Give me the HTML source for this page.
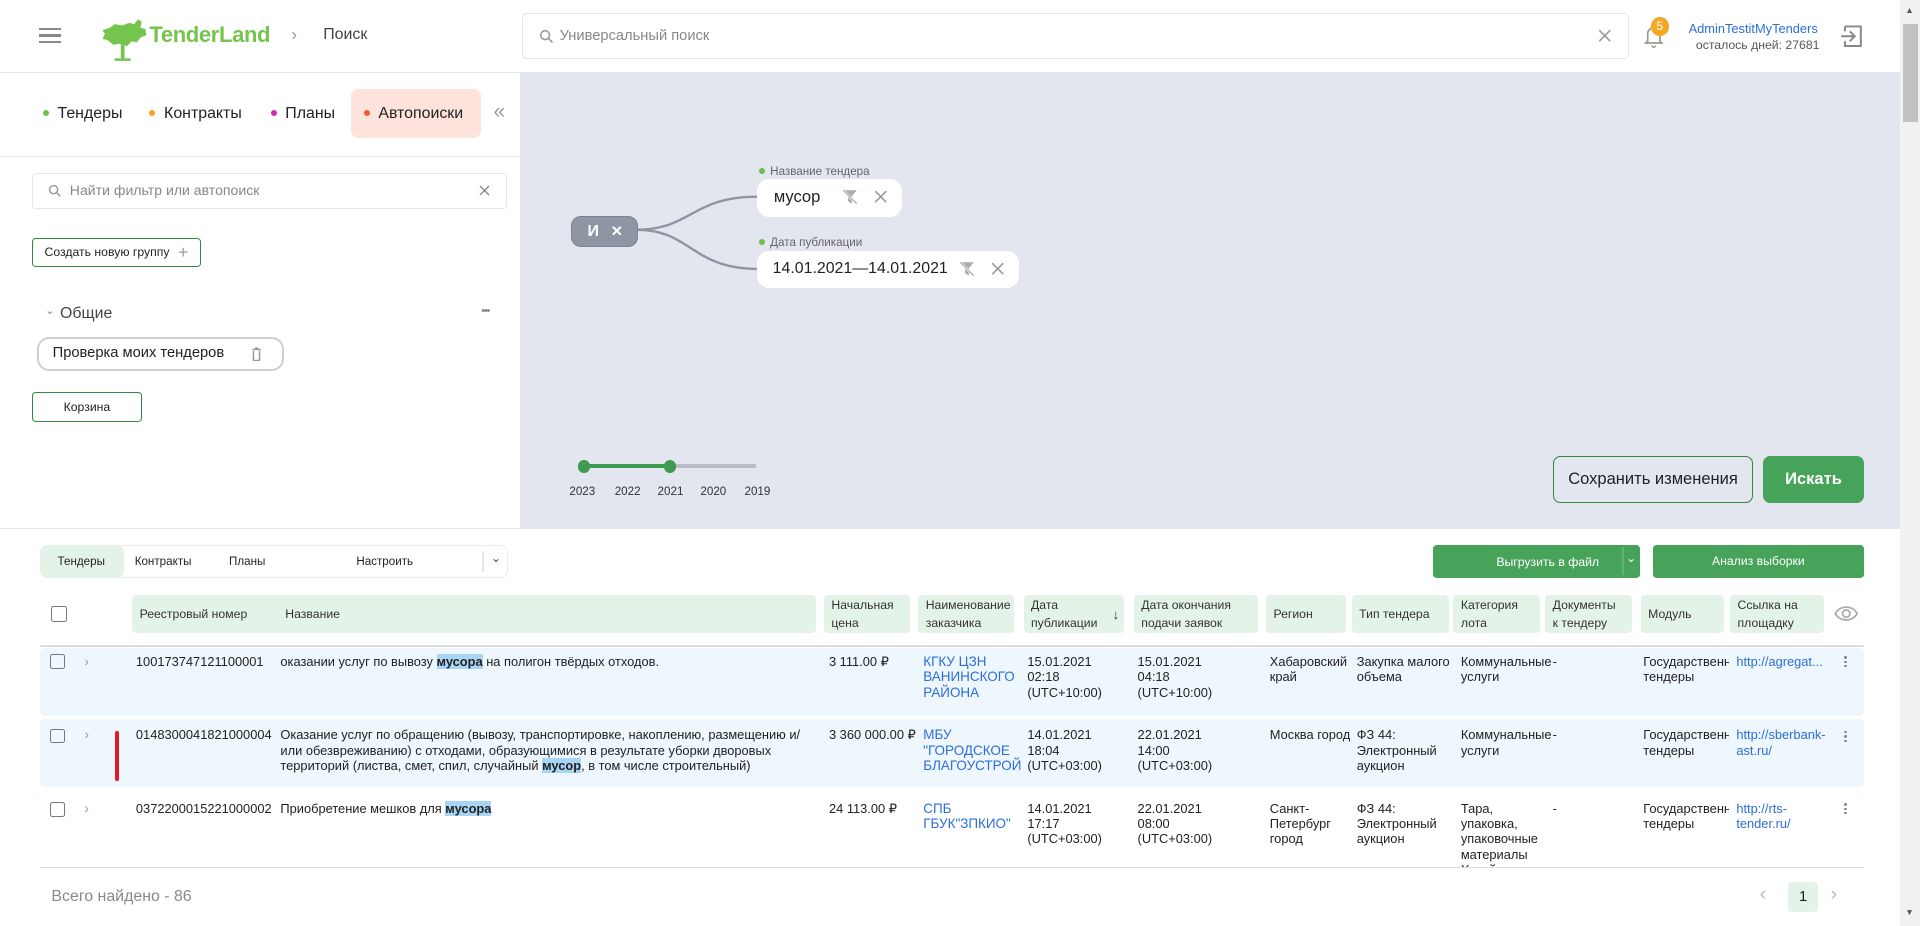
<!DOCTYPE html>
<html><head><meta charset="utf-8"><style>
*{box-sizing:border-box;margin:0;padding:0}
html,body{width:1920px;height:924px;overflow:hidden;background:#fff}
#root{position:absolute;left:0;top:0;width:1568px;height:756px;zoom:1.22449;font-family:"Liberation Sans",sans-serif;color:#222;background:#fff}
.a{position:absolute;white-space:nowrap}
.dot{display:inline-block;width:5px;height:5px;border-radius:50%;margin-right:7px;vertical-align:middle;position:relative;top:-1px}
.gbtn{position:absolute;border:1px solid #2e8b3e;border-radius:3px;font-size:10px;display:flex;align-items:center;justify-content:center;background:#fff}
.th{position:absolute;top:486px;height:31px;background:#e4f3e7;border-radius:3px;font-size:10px;color:#333;padding:2px 6px;display:flex;align-items:center;line-height:15px}
.cell{position:absolute;font-size:10.5px;line-height:12.5px;color:#222;white-space:normal}
.blue{color:#2c6ed8}
.hl{background:#a8d4f5;font-weight:bold}
.cb{position:absolute;width:12px;height:12px;border:1.5px solid #777;border-radius:2px}
.chev{position:absolute;font-size:11px;color:#999}
.kebab{position:absolute;width:3px;font-size:0}
.kebab i{display:block;width:2px;height:2px;background:#888;margin-bottom:1.5px;border-radius:1px}
</style></head><body><div id="root">

<!-- header -->
<div class="a" style="left:32px;top:23px;width:18px;height:12px;border-top:2px solid #888;border-bottom:2px solid #888"></div>
<div class="a" style="left:32px;top:28px;width:18px;height:2px;background:#888"></div>
<svg class="a" style="left:82px;top:15px" width="40" height="36" viewBox="0 0 40 36"><path d="M2 10 L8 8 L12 5 L18 6 L24 4 L28 5 L31 1 L34 3 L33 8 L37 9 L38 14 L33 16 L30 20 L26 19 L22 23 L16 21 L11 22 L6 18 L2 17 L4 13Z" fill="#74c44e"/><rect x="17" y="20" width="3" height="13" fill="#74c44e"/><path d="M12 34 L25 34" stroke="#74c44e" stroke-width="2"/></svg>
<div class="a" style="left:122px;top:18px;font-size:18px;font-weight:bold;color:#74c44e;letter-spacing:-0.3px">TenderLand</div>
<div class="a" style="left:238px;top:20px;font-size:14px;color:#999">›</div>
<div class="a" style="left:264px;top:21px;font-size:13px;color:#444">Поиск</div>
<div class="a" style="left:426px;top:11px;width:904px;height:37px;border:1px solid #e6e6e6;border-radius:4px"></div>
<svg class="a" style="left:440px;top:24px" width="12" height="12" viewBox="0 0 12 12"><circle cx="5" cy="5" r="3.6" fill="none" stroke="#999" stroke-width="1.3"/><path d="M7.7 7.7 L11 11" stroke="#999" stroke-width="1.3"/></svg>
<div class="a" style="left:457px;top:23px;font-size:12px;color:#888">Универсальный поиск</div>
<svg class="a" style="left:1305px;top:24px" width="11" height="11" viewBox="0 0 11 11"><path d="M1 1L10 10M10 1L1 10" stroke="#999" stroke-width="1.3"/></svg>
<svg class="a" style="left:1343px;top:20px" width="16" height="20" viewBox="0 0 16 20"><path d="M3 14 V8 A5 5 0 0 1 13 8 V14 L14.5 15.5 H1.5Z" fill="none" stroke="#999" stroke-width="1.4"/><path d="M6.5 17.5 A1.5 1.5 0 0 0 9.5 17.5" fill="none" stroke="#999" stroke-width="1.2"/></svg>
<div class="a" style="left:1348px;top:14px;width:15px;height:15px;border-radius:50%;background:#f5a623;color:#fff;font-size:10px;text-align:center;line-height:15px">5</div>
<div class="a" style="left:1379px;top:17px;font-size:10.5px;color:#2c6ed8">AdminTestitMyTenders</div>
<div class="a" style="left:1385px;top:31px;font-size:10px;color:#555">осталось дней: 27681</div>
<svg class="a" style="left:1503px;top:20px" width="20" height="20" viewBox="0 0 20 20"><path d="M4 2 H17 V18 H4 V14 M4 6 V2" fill="none" stroke="#888" stroke-width="1.6"/><path d="M1 10 H12 M8 6 L12 10 L8 14" fill="none" stroke="#888" stroke-width="1.6"/></svg>
<div class="a" style="left:0;top:59px;width:1552px;height:1px;background:#e6e6e6"></div>
<!-- scrollbar -->
<div class="a" style="left:1552px;top:0;width:16px;height:756px;background:#f1f1f1"></div>
<div class="a" style="left:1554px;top:20px;width:12px;height:80px;background:#c1c1c1"></div>
<div class="a" style="left:1556px;top:4px;font-size:7px;color:#555">▲</div>
<div class="a" style="left:1556px;top:741px;font-size:7px;color:#555">▼</div>

<!-- left panel -->
<div class="a" style="left:287px;top:73px;width:106px;height:40px;background:#fde3dc;border-radius:6px"></div>
<div class="a" style="left:35px;top:86px;font-size:13px"><span class="dot" style="background:#6cbf4a"></span>Тендеры</div>
<div class="a" style="left:122px;top:86px;font-size:13px"><span class="dot" style="background:#f5a02a"></span>Контракты</div>
<div class="a" style="left:221px;top:86px;font-size:13px"><span class="dot" style="background:#d62ab0"></span>Планы</div>
<div class="a" style="left:297px;top:86px;font-size:13px"><span class="dot" style="background:#ee5a36"></span>Автопоиски</div>
<div class="a" style="left:403px;top:82px;font-size:17px;color:#999">«</div>
<div class="a" style="left:0;top:127px;width:425px;height:1px;background:#e6e6e6"></div>
<div class="a" style="left:26px;top:141px;width:388px;height:30px;border:1px solid #e6e6e6;border-radius:3px"></div>
<svg class="a" style="left:39px;top:150px" width="11" height="11" viewBox="0 0 12 12"><circle cx="5" cy="5" r="3.6" fill="none" stroke="#999" stroke-width="1.3"/><path d="M7.7 7.7 L11 11" stroke="#999" stroke-width="1.3"/></svg>
<div class="a" style="left:57px;top:149px;font-size:11.5px;color:#888">Найти фильтр или автопоиск</div>
<svg class="a" style="left:391px;top:151px" width="9" height="9" viewBox="0 0 11 11"><path d="M1 1L10 10M10 1L1 10" stroke="#888" stroke-width="1.4"/></svg>
<div class="gbtn" style="left:26px;top:194px;width:138px;height:24px">Создать новую группу <span style="color:#999;font-size:14px;margin-left:7px">+</span></div>
<div class="a" style="left:37px;top:248px;font-size:9px;color:#888">⌄</div>
<div class="a" style="left:49px;top:249px;font-size:13px;color:#444">Общие</div>
<div class="a" style="left:393px;top:249px;font-size:9px;color:#888;letter-spacing:-1px">•••</div>
<div class="a" style="left:30px;top:275px;width:202px;height:28px;border:2px solid #cfcfd3;border-radius:10px"></div>
<div class="a" style="left:43px;top:282px;font-size:12px;color:#222">Проверка моих тендеров</div>
<svg class="a" style="left:205px;top:283px" width="9" height="12" viewBox="0 0 9 12"><path d="M1 2 H8 M3 1 H6 M2 3 V11 H7 V3" fill="none" stroke="#999" stroke-width="1.2"/></svg>
<div class="gbtn" style="left:26px;top:320px;width:90px;height:25px">Корзина</div>

<!-- canvas -->
<div class="a" style="left:425px;top:60px;width:1127px;height:371px;background:#e3e6ee"></div>
<svg class="a" style="left:425px;top:60px" width="300" height="200" viewBox="0 0 300 200"><path d="M95 128 C140 128 140 101 194 101" fill="none" stroke="#8f96a3" stroke-width="2"/><path d="M95 128 C140 128 140 160 194 160" fill="none" stroke="#8f96a3" stroke-width="2"/></svg>
<div class="a" style="left:466px;top:176px;width:55px;height:26px;background:#8f96a3;border:1px solid #7d8491;border-radius:8px;color:#fff;font-size:13px;line-height:24px;padding-left:13px;font-weight:bold">И <span style="margin-left:6px;font-size:12px">✕</span></div>
<div class="a" style="left:620px;top:135px;font-size:9.5px;color:#666"><span class="dot" style="background:#6cbf4a;margin-right:4px"></span>Название тендера</div>
<div class="a" style="left:618px;top:146px;width:119px;height:31px;background:#fff;border-radius:10px"></div>
<div class="a" style="left:632px;top:153px;font-size:13.5px;color:#222">мусор</div>
<div class="a" style="left:620px;top:193px;font-size:9.5px;color:#666"><span class="dot" style="background:#6cbf4a;margin-right:4px"></span>Дата публикации</div>
<div class="a" style="left:618px;top:205px;width:214px;height:30px;background:#fff;border-radius:10px"></div>
<div class="a" style="left:631px;top:212px;font-size:13px;color:#222">14.01.2021—14.01.2021</div>
<svg class="a" style="left:688px;top:154px" width="13" height="13" viewBox="0 0 13 13"><path d="M1 1 H12 L8 6 V12 L5 10 V6Z" fill="#aaa"/><path d="M1 1 L12 12" stroke="#fff" stroke-width="2"/><path d="M1 1 L12 12" stroke="#aaa" stroke-width="1"/></svg>
<svg class="a" style="left:714px;top:155px" width="11" height="11" viewBox="0 0 11 11"><path d="M1 1L10 10M10 1L1 10" stroke="#999" stroke-width="1.3"/></svg>
<svg class="a" style="left:783px;top:213px" width="13" height="13" viewBox="0 0 13 13"><path d="M1 1 H12 L8 6 V12 L5 10 V6Z" fill="#aaa"/><path d="M1 1 L12 12" stroke="#fff" stroke-width="2"/><path d="M1 1 L12 12" stroke="#aaa" stroke-width="1"/></svg>
<svg class="a" style="left:809px;top:214px" width="11" height="11" viewBox="0 0 11 11"><path d="M1 1L10 10M10 1L1 10" stroke="#999" stroke-width="1.3"/></svg>
<!-- slider -->
<div class="a" style="left:477px;top:379px;width:140px;height:3px;background:#b8bcc4"></div>
<div class="a" style="left:477px;top:379px;width:70px;height:3px;background:#3e9a4e"></div>
<div class="a" style="left:472px;top:376px;width:10px;height:10px;border-radius:50%;background:#3e9a4e"></div>
<div class="a" style="left:542px;top:376px;width:10px;height:10px;border-radius:50%;background:#3e9a4e"></div>
<div class="a" style="left:465px;top:396px;font-size:9.5px;color:#333">2023</div>
<div class="a" style="left:502px;top:396px;font-size:9.5px;color:#333">2022</div>
<div class="a" style="left:537px;top:396px;font-size:9.5px;color:#333">2021</div>
<div class="a" style="left:572px;top:396px;font-size:9.5px;color:#333">2020</div>
<div class="a" style="left:608px;top:396px;font-size:9.5px;color:#333">2019</div>
<div class="a" style="left:1268px;top:372px;width:164px;height:39px;border:1px solid #2e8b3e;border-radius:6px;font-size:13.5px;display:flex;align-items:center;justify-content:center;color:#222">Сохранить изменения</div>
<div class="a" style="left:1440px;top:372px;width:82px;height:39px;background:#45a35a;border-radius:6px;font-size:13.5px;font-weight:bold;color:#fff;display:flex;align-items:center;justify-content:center">Искать</div>
<div class="a" style="left:0;top:431px;width:1552px;height:1px;background:#e6e6e6"></div>

<!-- bottom tabs -->
<div class="a" style="left:33px;top:445px;width:382px;height:27px;border:1px solid #ececec;border-radius:6px"></div>
<div class="a" style="left:33px;top:445px;width:68px;height:27px;background:#e4f3e7;border-radius:6px"></div>
<div class="a" style="left:47px;top:453px;font-size:9.5px">Тендеры</div>
<div class="a" style="left:110px;top:453px;font-size:9.5px">Контракты</div>
<div class="a" style="left:187px;top:453px;font-size:9.5px">Планы</div>
<div class="a" style="left:291px;top:453px;font-size:9.5px">Настроить</div>
<div class="a" style="left:394px;top:450px;width:1px;height:17px;background:#e6e6e6"></div>
<div class="a" style="left:401px;top:450px;font-size:10px;color:#444">⌄</div>
<div class="a" style="left:1170px;top:445px;width:169px;height:27px;background:#47a35a;border-radius:3px;color:#fff;font-size:10px"><span style="position:absolute;left:52px;top:8px">Выгрузить в файл</span><span style="position:absolute;left:155px;top:2px;width:1px;height:23px;background:#5fb56f"></span><span style="position:absolute;left:158px;top:5px;font-size:10px">⌄</span></div>
<div class="a" style="left:1350px;top:445px;width:172px;height:27px;background:#47a35a;border-radius:3px;color:#fff;font-size:10px;display:flex;align-items:center;justify-content:center">Анализ выборки</div>

<!-- table header -->
<div class="cb" style="left:42px;top:495px;width:13px;height:13px"></div>
<div class="th" style="left:108px;width:160px">Реестровый номер</div>
<div class="th" style="left:227px;width:439px">Название</div>
<div class="th" style="left:673px;width:70px">Начальная<br>цена</div>
<div class="th" style="left:750px;width:78px;overflow:hidden;white-space:nowrap">Наименование<br>заказчика</div>
<div class="th" style="left:836px;width:82px">Дата<br>публикации<span style="position:absolute;right:4px;top:9px;font-size:11px">↓</span></div>
<div class="th" style="left:926px;width:101px">Дата окончания<br>подачи заявок</div>
<div class="th" style="left:1034px;width:65px">Регион</div>
<div class="th" style="left:1104px;width:79px">Тип тендера</div>
<div class="th" style="left:1187px;width:71px">Категория<br>лота</div>
<div class="th" style="left:1262px;width:71px">Документы<br>к тендеру</div>
<div class="th" style="left:1340px;width:68px">Модуль</div>
<div class="th" style="left:1413px;width:77px">Ссылка на<br>площадку</div>
<svg class="a" style="left:1498px;top:494px" width="20" height="14" viewBox="0 0 20 14"><path d="M1 7 C5 0 15 0 19 7 C15 14 5 14 1 7Z" fill="none" stroke="#aaa" stroke-width="1.4"/><circle cx="10" cy="7" r="3" fill="none" stroke="#aaa" stroke-width="1.4"/></svg>
<div class="a" style="left:33px;top:527px;width:1489px;height:1px;background:#ddd"></div>

<!-- rows -->
<div class="a" style="left:33px;top:529px;width:1489px;height:56px;background:#eef6fe;border-radius:4px"></div>
<div class="a" style="left:33px;top:587px;width:1489px;height:56px;background:#eef6fe;border-radius:4px"></div>
<div class="a" style="left:33px;top:708px;width:1489px;height:1px;background:#ddd"></div>

<div class="cb" style="left:41px;top:534px"></div><div class="chev" style="left:69px;top:534px">›</div>
<div class="cell" style="left:111px;top:534px">100173747121100001</div>
<div class="cell" style="left:229px;top:534px;width:430px">оказании услуг по вывозу <span class="hl">мусора</span> на полигон твёрдых отходов.</div>
<div class="cell" style="left:677px;top:534px">3 111.00 ₽</div>
<div class="cell blue" style="left:754px;top:534px;width:76px;font-size:11px">КГКУ ЦЗН ВАНИНСКОГО РАЙОНА</div>
<div class="cell" style="left:839px;top:534px;width:80px">15.01.2021 02:18 (UTC+10:00)</div>
<div class="cell" style="left:929px;top:534px;width:80px">15.01.2021 04:18 (UTC+10:00)</div>
<div class="cell" style="left:1037px;top:534px;width:66px">Хабаровский край</div>
<div class="cell" style="left:1108px;top:534px;width:80px">Закупка малого объема</div>
<div class="cell" style="left:1193px;top:534px;width:72px">Коммунальные услуги</div>
<div class="cell" style="left:1268px;top:534px">-</div>
<div class="cell" style="left:1342px;top:534px;width:70px;overflow:hidden">Государственные тендеры</div>
<div class="cell blue" style="left:1418px;top:534px">http://agregat...</div>
<div class="kebab" style="left:1506px;top:536px"><i></i><i></i><i></i></div>

<div class="cb" style="left:41px;top:595px"></div><div class="chev" style="left:69px;top:594px">›</div>
<div class="a" style="left:94px;top:597px;width:3px;height:41px;background:#e0192b;border-radius:2px"></div>
<div class="cell" style="left:111px;top:594px">0148300041821000004</div>
<div class="cell" style="left:229px;top:594px;width:435px">Оказание услуг по обращению (вывозу, транспортировке, накоплению, размещению и/или обезвреживанию) с отходами, образующимися в результате уборки дворовых территорий (листва, смет, спил, случайный <span class="hl">мусор</span>, в том числе строительный)</div>
<div class="cell" style="left:677px;top:594px">3 360 000.00 ₽</div>
<div class="cell blue" style="left:754px;top:594px;width:80px;font-size:11px;overflow:hidden;white-space:nowrap">МБУ<br>"ГОРОДСКОЕ<br>БЛАГОУСТРОЙСТВО</div>
<div class="cell" style="left:839px;top:594px;width:80px">14.01.2021 18:04 (UTC+03:00)</div>
<div class="cell" style="left:929px;top:594px;width:80px">22.01.2021 14:00 (UTC+03:00)</div>
<div class="cell" style="left:1037px;top:594px;width:70px">Москва город</div>
<div class="cell" style="left:1108px;top:594px;width:78px">ФЗ 44: Электронный аукцион</div>
<div class="cell" style="left:1193px;top:594px;width:72px">Коммунальные услуги</div>
<div class="cell" style="left:1268px;top:594px">-</div>
<div class="cell" style="left:1342px;top:594px;width:70px;overflow:hidden">Государственные тендеры</div>
<div class="cell blue" style="left:1418px;top:594px;width:72px">http://sberbank-ast.ru/</div>
<div class="kebab" style="left:1506px;top:597px"><i></i><i></i><i></i></div>

<div class="cb" style="left:41px;top:655px"></div><div class="chev" style="left:69px;top:654px">›</div>
<div class="cell" style="left:111px;top:654px">0372200015221000002</div>
<div class="cell" style="left:229px;top:654px;width:430px">Приобретение мешков для <span class="hl">мусора</span></div>
<div class="cell" style="left:677px;top:654px">24 113.00 ₽</div>
<div class="cell blue" style="left:754px;top:654px;width:76px;font-size:11px">СПБ ГБУК"ЗПКИО"</div>
<div class="cell" style="left:839px;top:654px;width:80px">14.01.2021 17:17 (UTC+03:00)</div>
<div class="cell" style="left:929px;top:654px;width:80px">22.01.2021 08:00 (UTC+03:00)</div>
<div class="cell" style="left:1037px;top:654px;width:66px">Санкт-Петербург город</div>
<div class="cell" style="left:1108px;top:654px;width:78px">ФЗ 44: Электронный аукцион</div>
<div class="cell" style="left:1193px;top:654px;width:72px;height:54px;overflow:hidden">Тара, упаковка, упаковочные материалы Хозяйственные</div>
<div class="cell" style="left:1268px;top:654px">-</div>
<div class="cell" style="left:1342px;top:654px;width:70px;overflow:hidden">Государственные тендеры</div>
<div class="cell blue" style="left:1418px;top:654px;width:60px">http://rts-tender.ru/</div>
<div class="kebab" style="left:1506px;top:656px"><i></i><i></i><i></i></div>

<!-- footer -->
<div class="a" style="left:42px;top:725px;font-size:13px;color:#888">Всего найдено - 86</div>
<div class="a" style="left:1437px;top:721px;font-size:16px;color:#bbb">‹</div>
<div class="a" style="left:1460px;top:720px;width:25px;height:25px;background:#e4f3e7;border-radius:3px;font-size:12px;text-align:center;line-height:25px;color:#222">1</div>
<div class="a" style="left:1495px;top:721px;font-size:16px;color:#bbb">›</div>
</div></body></html>
